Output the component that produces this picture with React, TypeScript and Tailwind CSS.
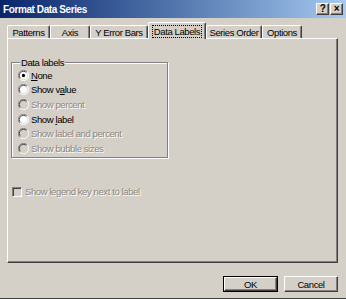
import React from "react";

const font = { fontFamily: '"Liberation Sans", Arial, sans-serif' };

function Radio({ checked = false, disabled = false }: { checked?: boolean; disabled?: boolean }) {
  return (
    <svg width="11" height="11" viewBox="0 0 12 12" className="shrink-0">
      <circle cx="6" cy="6" r="5.5" fill={disabled ? "#d4d0c8" : "#ffffff"} />
      <path d="M10 2 A5.5 5.5 0 0 0 2 10" fill="none" stroke="#808080" strokeWidth="1" />
      <path d="M2 10 A5.5 5.5 0 0 0 10 2" fill="none" stroke="#ffffff" strokeWidth="1" />
      <path d="M9.2 2.8 A4.5 4.5 0 0 0 2.8 9.2" fill="none" stroke="#404040" strokeWidth="1" />
      <path d="M2.8 9.2 A4.5 4.5 0 0 0 9.2 2.8" fill="none" stroke="#d4d0c8" strokeWidth="1" />
      {checked && <circle cx="6" cy="6" r="1.8" fill="#000" />}
    </svg>
  );
}

function Option({
  children,
  checked,
  disabled,
}: {
  children: React.ReactNode;
  checked?: boolean;
  disabled?: boolean;
}) {
  return (
    <div className="flex h-[14.6px] items-center gap-[2px]">
      <Radio checked={checked} disabled={disabled} />
      <span
        className={
          disabled
            ? "text-[#8a8782] [text-shadow:1px_1px_0_#ffffff]"
            : "text-black"
        }
      >
        {children}
      </span>
    </div>
  );
}

const tabs = [
  { label: "Patterns", w: "w-[43px]" },
  { label: "Axis", w: "w-[40px]" },
  { label: "Y Error Bars", w: "w-[58px]" },
  { label: "Data Labels", w: "w-[58px]", active: true },
  { label: "Series Order", w: "w-[56px]" },
  { label: "Options", w: "w-[40px]" },
];

export default function App() {
  return (
    <div
      style={font}
      className="flex h-[299px] w-[346px] flex-col overflow-hidden border-b border-b-[#404040] bg-[#d4d0c8] text-[9.5px] leading-[11px] tracking-[-0.4px] text-black"
    >
      {/* title bar */}
      <div className="flex h-[18px] shrink-0 items-center justify-between bg-gradient-to-r from-[#0a246a] to-[#a6caf0] pl-[3px] pr-[3px]">
        <span className="text-[10px] font-bold tracking-[-0.4px] text-white">Format Data Series</span>
        <div className="flex gap-[1px]">
          {["?", "×"].map((c) => (
            <span
              key={c}
              className="flex h-[12px] w-[13px] items-center justify-center border border-t-white border-l-white border-r-[#404040] border-b-[#404040] bg-[#d4d0c8] text-[10px] font-bold leading-none shadow-[inset_-1px_-1px_0_#808080]"
            >
              {c}
            </span>
          ))}
        </div>
      </div>

      <div className="flex flex-1 flex-col pl-[7px] pr-[8px]">
        {/* tabs */}
        <div className="mt-[4px] flex h-[16px] items-end">
          {tabs.map((t) => (
            <div
              key={t.label}
              className={`${t.w} relative flex items-center justify-center rounded-t-[2px] border-l border-t border-r border-l-white border-t-white border-r-[#404040] shadow-[inset_-1px_0_0_#808080] ${
                t.active ? "z-10 -mb-[1px] h-[17px] bg-[#d4d0c8]" : "h-[13px]"
              }`}
            >
              <span className={t.active ? "border border-dotted border-black px-[1px]" : ""}>{t.label}</span>
            </div>
          ))}
        </div>

        {/* panel */}
        <div className="flex h-[225px] flex-col border border-t-white border-l-white border-r-[#404040] border-b-[#404040] pl-[3px] shadow-[inset_-1px_-1px_0_#808080]">
          <fieldset className="mt-[18px] h-[101px] w-[157px] border border-[#808080] pl-[6px] shadow-[1px_1px_0_#ffffff,inset_1px_1px_0_#ffffff]">
            <legend className="ml-[2px] bg-[#d4d0c8] px-[1px]">Data labels</legend>
            <Option checked>
              <u>N</u>one
            </Option>
            <Option>
              Show v<u>a</u>lue
            </Option>
            <Option disabled>Show percent</Option>
            <Option>
              Show <u>l</u>abel
            </Option>
            <Option disabled>Show label and percent</Option>
            <Option disabled>Show bubble sizes</Option>
          </fieldset>

          <div className="ml-[1px] mt-[28px] flex items-center gap-[3px]">
            <span className="h-[10px] w-[10px] border border-t-[#808080] border-l-[#808080] border-r-white border-b-white bg-[#d4d0c8] shadow-[inset_1px_1px_0_#404040]" />
            <span className="text-[#8a8782] [text-shadow:1px_1px_0_#ffffff]">Show legend key next to label</span>
          </div>
        </div>

        {/* buttons */}
        <div className="mt-[13px] flex justify-end gap-[6px]">
          <button className="flex h-[16px] w-[55px] items-center justify-center border border-black bg-[#d4d0c8]">
            <span className="flex h-full w-full items-center justify-center border border-t-white border-l-white border-r-[#404040] border-b-[#404040] shadow-[inset_-1px_-1px_0_#808080]">
              OK
            </span>
          </button>
          <button className="flex h-[16px] w-[54px] items-center justify-center border border-t-white border-l-white border-r-[#404040] border-b-[#404040] bg-[#d4d0c8] shadow-[inset_-1px_-1px_0_#808080]">
            Cancel
          </button>
        </div>
      </div>
    </div>
  );
}
